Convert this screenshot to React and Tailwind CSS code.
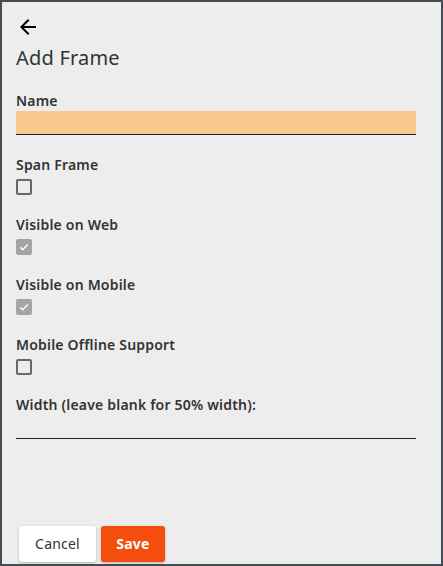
import { MdArrowBack } from "react-icons/md";

function Box({ checked }) {
    if (checked) {
        return (
            <div className="w-4 h-4 rounded-[2px] bg-[#a4a4a4] flex items-center justify-center">
                <svg width="12" height="12" viewBox="0 0 12 12" fill="none">
                    <path d="M2.2 6.3 4.7 8.7 9.8 3.4" stroke="#fff" strokeWidth="1.4" />
                </svg>
            </div>
        );
    }
    return <div className="w-4 h-4 rounded-[2px] border-2 border-[#676767]" />;
}

function CheckField({ label, checked }) {
    return (
        <div className="mt-5">
            <div className="text-sm font-semibold leading-5 text-[#333]">{label}</div>
            <div className="mt-1">
                <Box checked={checked} />
            </div>
        </div>
    );
}

export default function App() {
    return (
        <div
            className="w-[443px] h-[566px] border-2 border-[#484d55] bg-[#ededed] flex flex-col text-[#333] tracking-[0.2px]"
            style={{ fontFamily: '"Noto Sans", "Open Sans", sans-serif' }}
        >
            <div className="px-[14px] pt-[13px]">
                <MdArrowBack className="w-6 h-6 text-black" />
                <h1 className="text-[20px] leading-7 mt-[5px] text-[#333]">Add Frame</h1>

                <div className="mt-[19px] text-sm font-semibold leading-5">Name</div>
                <div className="w-[400px] h-6 bg-[#fbc98e] border-b border-[#222]" />

                <CheckField label="Span Frame" />
                <CheckField label="Visible on Web" checked />
                <CheckField label="Visible on Mobile" checked />
                <CheckField label="Mobile Offline Support" />

                <div className="mt-5 text-sm font-semibold leading-5">Width (leave blank for 50% width):</div>
                <div className="w-[400px] h-6 border-b border-[#222]" />
            </div>

            <div className="mt-auto flex gap-[5px] pl-[17px] pb-[2px]">
                <button className="w-[77px] h-9 bg-white rounded-[3px] shadow-[0_1px_3px_rgba(0,0,0,0.25)] text-sm text-[#333]">
                    Cancel
                </button>
                <button className="w-16 h-9 bg-[#f44d0e] rounded-[3px] shadow-[0_1px_3px_rgba(0,0,0,0.25)] text-sm font-bold text-white">
                    Save
                </button>
            </div>
        </div>
    );
}
